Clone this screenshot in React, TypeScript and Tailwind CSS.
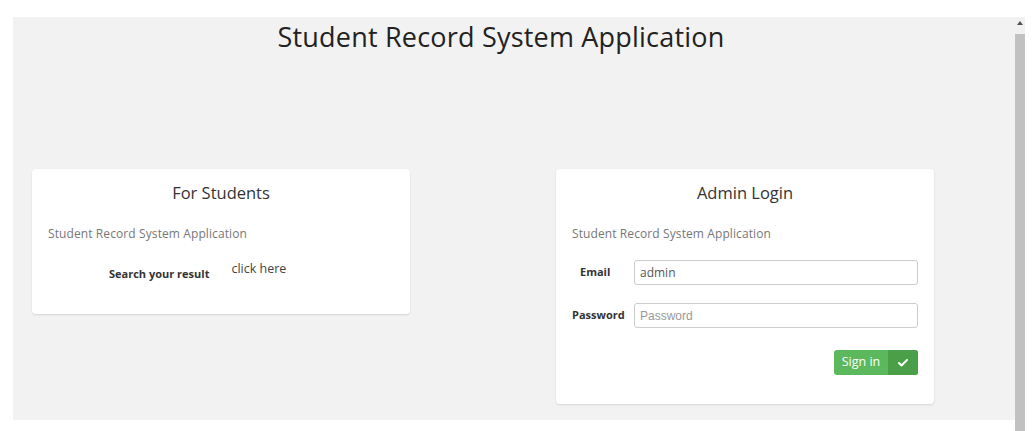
import { Check } from "lucide-react";

const FONT = "font-['Open_Sans',sans-serif]";

function Card({ title, children, className = "" }: { title: string; children: React.ReactNode; className?: string }) {
  return (
    <div className={`rounded bg-white px-4 shadow-[0_1px_2px_rgba(0,0,0,0.12)] ${className}`}>
      <h3 className="pt-[13px] text-center text-[16.5px] leading-[22px] text-[#333]">{title}</h3>
      <p className="mt-[22px] text-[12px] leading-[16px] tracking-[0.1px] text-[#777]">Student Record System Application</p>
      {children}
    </div>
  );
}

export default function App() {
  return (
    <div className={`flex h-[431px] w-[1035px] bg-white pt-[17px] pl-[13px] ${FONT}`}>
      <main className="flex h-[403px] w-[1002px] flex-col bg-[#f2f2f2]">
        <h1 className="mr-[26px] pt-[1px] text-center text-[27px] leading-[38px] tracking-[0.2px] text-[#222]">
          Student Record System Application
        </h1>
        <div className="mt-[113px] flex items-start px-[19px]">
          <Card title="For Students" className="h-[145px] w-[378px]">
            <div className="mt-[18px] flex items-start">
              <span className="ml-[61px] mt-[6px] text-[11px] font-bold text-[#333]">Search your result</span>
              <a className="ml-[22px] text-[12.5px] text-[#444]">click here</a>
            </div>
          </Card>
          <Card title="Admin Login" className="ml-[146px] h-[235px] w-[378px]">
            <div className="mt-[18px] flex flex-col gap-[18px]">
              <div className="flex items-center">
                <label className="w-[62px] pl-[8px] text-[11px] font-bold text-[#333]">Email</label>
                <input
                  defaultValue="admin"
                  className="h-[25px] w-[284px] rounded-[3px] border border-[#ccc] px-[5px] text-[12px] text-[#555] outline-none"
                />
              </div>
              <div className="flex items-center">
                <label className="w-[62px] text-[11px] font-bold text-[#333]">Password</label>
                <input
                  placeholder="Password"
                  className="h-[25px] w-[284px] rounded-[3px] border border-[#ccc] px-[5px] font-['Liberation_Sans',sans-serif] text-[12px] text-[#555] outline-none placeholder:text-[#999]"
                />
              </div>
            </div>
            <div className="mt-[22px] flex justify-end">
              <button className="flex h-[25px] overflow-hidden rounded-[3px] bg-[#5cb85c] text-[12.5px] text-white">
                <span className="flex w-[54px] items-center justify-center">Sign in</span>
                <span className="flex w-[30px] items-center justify-center bg-[#4a9f48]">
                  <Check className="h-3 w-3" strokeWidth={4} />
                </span>
              </button>
            </div>
          </Card>
        </div>
      </main>
      <div className="flex h-[414px] w-[10px] flex-col bg-[#f1f1f1]">
        <div className="flex h-[17px] justify-center pt-[4px]">
          <div className="h-0 w-0 border-x-[3px] border-b-[4px] border-x-transparent border-b-[#505050]" />
        </div>
        <div className="flex-1 bg-[#c1c1c1]" />
      </div>
    </div>
  );
}
